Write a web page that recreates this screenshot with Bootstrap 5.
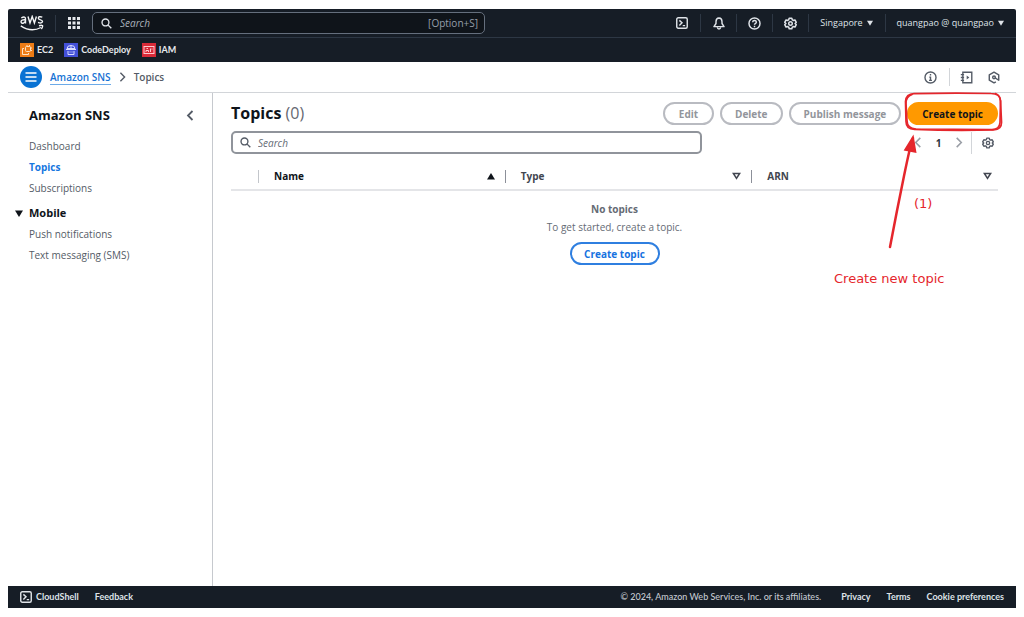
<!DOCTYPE html>
<html lang="en">
<head>
<meta charset="utf-8">
<meta name="viewport" content="width=device-width, initial-scale=1">
<title>Topics | Amazon SNS</title>
<link href="https://cdn.jsdelivr.net/npm/bootstrap@5.3.0/dist/css/bootstrap.min.css" rel="stylesheet">
<style>
:root { --ink:#0f141a; --navy:#161d26; --grey:#545b66; --blue:#0972d3; --accent:#e5262c; }
body { font-family:"Open Sans","Noto Sans",sans-serif; font-size:10px; line-height:20px; color:var(--grey); background:#fff; padding:9px 8px; }
button { color:inherit; background:none; border:0; padding:0; }
svg { display:block; flex:none; }
.topbar { background:var(--navy); color:#dfe3e8; border-radius:2px 2px 0 0; font-size:9px; font-weight:500; }
.toprow { height:29px; border-bottom:1px solid #2d3744; }
.logo-cell { width:48px; border-right:1px solid #2d3744; padding-left:12px; }
.apps { width:36px; }
.global-search { flex:0 1 393px; height:22px; background:#0f141a; border:1px solid #656f7d; border-radius:5px; padding:0 6px 0 8px; }
.global-search input, .filter input { background:none; border:0; outline:0; padding:0; font-style:italic; min-width:0; }
.global-search input { color:#dfe3e8; font-size:10px; }
.global-search input::placeholder { color:#a9b1bb; opacity:1; }
.hint { font-size:10px; color:#969faa; }
.tool { width:36px; height:18px; }
.tool + .tool, .menu { border-left:1px solid #2d3744; }
.menu { height:18px; line-height:18px; padding:0 12px 0 11px; gap:4px; }
.favs { height:24px; padding-left:12px; gap:11px; font-family:Lato,"Open Sans",sans-serif; font-weight:700; }
.favs a { color:#e6e9ed; gap:3px; }
.crumbs { height:31px; border-bottom:1px solid #d2d5d9; padding:0 16px 0 12px; font-size:10px; font-weight:600; }
.burger { width:22px; height:22px; border-radius:50%; background:var(--blue); color:#fff; }
.crumbs a { color:#1672d4; line-height:14px; border-bottom:1px solid #6caae8; text-decoration:none; }
.aid { border-left:1px solid #d2d5d9; height:18px; padding-left:10px; gap:15px; }
.side { flex:0 0 205px; border-right:1px solid #c6c9ce; padding:12px 17px 0 21px; }
.side h2 { font-size:13px; line-height:20px; font-weight:700; color:var(--ink); margin:0; }
.side ul { gap:1px; margin:0; }
.side .first-list { margin-top:11px; }
.side li a { color:var(--grey); }
.side li a.active { color:#1677e0; font-weight:700; }
.side .group { font-size:11px; font-weight:700; color:var(--ink); margin:5px 0 1px -14px; gap:6px; }
main { padding:9px 18px 0; min-width:0; }
h1 { font-size:16px; line-height:23px; font-weight:700; color:var(--ink); margin:0; }
h1 span { font-weight:400; color:#656871; }
.actions { gap:6px; }
.tools { margin-top:6px; }
.pill { height:23px; min-width:51px; border-radius:12px; border:2px solid #b9bbc1; color:#92959b; font-size:10px; line-height:18px; font-weight:700; padding:0 13px; white-space:nowrap; }
.pill-primary { background:#ff9900; border-color:#ff9900; color:var(--ink); }
.pill-outline { border-color:#2f7fe0; color:#1672e0; }
.filter { flex:0 1 471px; height:23px; border:2px solid #90949b; border-radius:5px; padding:0 7px; gap:7px; }
.filter input { font-size:10px; color:var(--grey); }
.filter input::placeholder { color:#656b75; opacity:1; }
.pager { color:#9a9ea6; }
.pager .num { width:9px; margin:0 12px; font-weight:700; color:#30353c; }
.prefs { border-left:1px solid #d2d5d9; height:22px; padding:0 4px 0 10px; color:var(--grey); }
.topics { table-layout:fixed; margin:9px 0 0; width:100%; }
.topics th { height:27px; padding:0; border-bottom:2px solid #e4e5e8; color:#424650; font-weight:700; font-size:10px; vertical-align:middle; }
.topics th.pick { width:27px; }
.topics th:not(.pick) > div { border-left:1px solid #8c9099; height:13px; line-height:13px; padding:0 6px 0 15px; }
.topics th.by > div { border-color:#c3c6cb !important; padding-right:10px !important; }
.topics th.mid > div { padding-right:10px !important; }
.topics th.by { color:var(--ink); }
.topics td { border:0; padding:9px 0 0; line-height:18px; color:#656b75; }
.topics .pill { margin-top:6px; width:90px; padding:0; }
.callout { position:absolute; top:-10px; right:-5px; width:172px; height:200px; pointer-events:none; color:var(--accent); }
.callout p { position:absolute; margin:0; font-family:"DejaVu Sans",sans-serif; font-size:13px; line-height:18px; white-space:nowrap; }
.callout .step { left:83px; top:103px; }
.callout .note { left:3px; top:178px; }
footer { background:var(--navy); color:#c5cad1; height:22px; font-family:Lato,"Open Sans",sans-serif; font-size:9px; font-weight:500; padding:0 12px; }
footer a, footer button { color:#dfe3e8; font-weight:700; }
</style>
</head>
<body class="d-flex flex-column vh-100">
<svg width="0" height="0" class="position-absolute" aria-hidden="true">
  <defs>
    <symbol id="gear" viewBox="0 0 16 16"><path d="M6.4 1.5h3.2l.6 1.9 1.3.8 2-.5 1.6 2.8L13.700 8l1.400 1.500-1.600 2.800-2-.5-1.300.8-.6 1.900H6.400l-.6-1.900-1.300-.8-2 .5L.9 9.500 2.300 8 .9 6.500l1.600-2.800 2 .5 1.300-.8z" fill="none" stroke="currentColor" stroke-width="1.900" stroke-linejoin="round"/><circle cx="8" cy="8" r="2.200" fill="none" stroke="currentColor" stroke-width="1.800"/></symbol>
    <symbol id="lens" viewBox="0 0 16 16"><g fill="none" stroke="currentColor" stroke-width="2"><circle cx="6.500" cy="6.500" r="5"/><path d="M10 10l5 5"/></g></symbol>
    <symbol id="shell" viewBox="0 0 16 16"><g fill="none" stroke="currentColor" stroke-width="1.900"><rect x="1" y="1" width="14" height="14" rx="2"/><path d="M4.500 4.500L8 7.800l-3.500 3.400M9 11.500h3.200"/></g></symbol>
    <symbol id="left" viewBox="0 0 8 12"><path d="M6.500 1L1.500 6l5 5" fill="none" stroke="currentColor" stroke-width="1.700"/></symbol>
    <symbol id="right" viewBox="0 0 8 12"><path d="M1.500 1l5 5-5 5" fill="none" stroke="currentColor" stroke-width="1.700"/></symbol>
    <symbol id="down" viewBox="0 0 8 7"><path d="M0 .5h8L4 7z" fill="currentColor"/></symbol>
    <symbol id="sort" viewBox="0 0 8 7"><path d="M1.200 1.200h5.600L4 5.600z" fill="none" stroke="currentColor" stroke-width="1.400"/></symbol>
  </defs>
</svg>

<header>
  <div class="topbar">
    <div class="toprow d-flex align-items-center">
      <a href="#" class="logo-cell d-flex align-items-center text-reset text-decoration-none" aria-label="AWS home">
        <svg width="24" height="17" viewBox="0 0 24 17"><g fill="none" stroke="#f4f5f6" stroke-width="1.400"><path d="M1.300 2.800Q5.500 .8 5.500 4V8.500M5.500 4.800Q1 4.400 1 6.700 1.300 8.700 3.600 8 5.500 7.300 5.500 5.300M8 1.500l2 6.500 2.200-6.500 2.200 6.500 2-6.500M22.300 2.100Q18.300 .9 18.300 3.200q.2 1.200 2.200 1.700 2 .5 2 1.700-.7 2.200-4.500.8"/><path d="M.8 10.800Q11 17.800 21 12.500M19 10.700q3.500-.8 3.700.1-.1 1.700-1.300 3.200"/></g></svg>
      </a>
      <button class="apps d-flex justify-content-center" aria-label="Services"><svg width="12" height="12" viewBox="0 0 12 12" fill="#e6e9ed"><path d="M0 0h3v3H0zM4.500 0h3v3h-3zM9 0h3v3H9zM0 4.500h3v3H0zM4.500 4.500h3v3h-3zM9 4.500h3v3H9zM0 9h3v3H0zM4.500 9h3v3h-3zM9 9h3v3H9z"/></svg></button>
      <label class="global-search d-flex align-items-center gap-2"><svg width="11" height="11"><use href="#lens"/></svg><input class="flex-grow-1" type="text" placeholder="Search" aria-label="Search"><span class="hint">[Option+S]</span></label>
      <div class="ms-auto d-flex align-items-center">
        <button class="tool d-flex align-items-center justify-content-center" aria-label="CloudShell"><svg width="12" height="12"><use href="#shell"/></svg></button>
        <button class="tool d-flex align-items-center justify-content-center" aria-label="Notifications"><svg width="12" height="13" viewBox="0 0 16 17" fill="none" stroke="currentColor" stroke-width="1.900"><path d="M8 1.200Q4 1.500 4 6v2.500L1.300 12.700h13.400L12 8.500V6Q12 1.500 8 1.200z" stroke-linejoin="round"/><path d="M5.800 13.500q.2 2.400 2.200 2.400t2.200-2.400"/></svg></button>
        <button class="tool d-flex align-items-center justify-content-center" aria-label="Help"><svg width="13" height="13" viewBox="0 0 16 16" fill="none" stroke="currentColor" stroke-width="1.800"><circle cx="8" cy="8" r="6.800"/><path d="M5.700 6.400Q5.900 4.200 8 4.200t2.300 2q0 1.200-1.300 1.900-1 .6-1 1.500M8 10.800v1.700"/></svg></button>
        <button class="tool d-flex align-items-center justify-content-center" aria-label="Settings"><svg width="13" height="13"><use href="#gear"/></svg></button>
        <button class="menu d-flex align-items-center">Singapore <svg width="6" height="6"><use href="#down"/></svg></button>
        <button class="menu d-flex align-items-center">quangpao @ quangpao <svg width="6" height="6"><use href="#down"/></svg></button>
      </div>
    </div>
    <nav class="favs d-flex align-items-center" aria-label="Favorites">
      <a href="#" class="d-flex align-items-center text-decoration-none"><svg width="14" height="14" viewBox="0 0 14 14"><rect width="14" height="14" fill="#ed7c16"/><g fill="none" stroke="#ffe2c2"><rect x="5.500" y="3.500" width="5" height="5" rx="1"/><path d="M4 5.500H2.500v6h6V10M7 2v1.500M9.500 2v1.500M10.500 5H12M10.500 7.500H12"/></g></svg>EC2</a>
      <a href="#" class="d-flex align-items-center text-decoration-none"><svg width="14" height="14" viewBox="0 0 14 14"><rect width="14" height="14" fill="#4350d8"/><g fill="none" stroke="#dadcff"><path d="M3 5.500Q3 2.500 7 2.500t4 3zM2 6.500h10M4 8v3.500h6V8M6 8.500v1M8 8.500v1M7 2.500v3"/></g></svg>CodeDeploy</a>
      <a href="#" class="d-flex align-items-center text-decoration-none"><svg width="14" height="14" viewBox="0 0 14 14"><rect width="14" height="14" fill="#d92a38"/><g fill="none" stroke="#ffc9ce"><rect x="2" y="3.500" width="10" height="7"/><path d="M4 9V7.500h2.500V9M4.500 5.500h1.500M8.500 5.500v3.500M10 5.500v1"/></g></svg>IAM</a>
    </nav>
  </div>
  <div class="crumbs d-flex align-items-center">
    <button class="burger d-flex align-items-center justify-content-center" aria-label="Open navigation"><svg width="12" height="10" viewBox="0 0 12 10" stroke="currentColor" stroke-width="1.600"><path d="M.5 1h11M.5 5h11M.5 9h11"/></svg></button>
    <nav class="d-flex align-items-center gap-2 ms-2" aria-label="Breadcrumb"><a href="#">Amazon SNS</a><svg width="7" height="10"><use href="#right"/></svg><span>Topics</span></nav>
    <button class="ms-auto me-2 pe-1" aria-label="Info"><svg width="13" height="13" viewBox="0 0 16 16" fill="none" stroke="currentColor" stroke-width="1.700"><circle cx="8" cy="8" r="6.800"/><path d="M8 3.800v1.700M6.500 7.500H8v4M6.200 11.500h3.600"/></svg></button>
    <div class="aid d-flex align-items-center">
      <button aria-label="Tutorials"><svg width="13" height="13" viewBox="0 0 16 16" fill="none" stroke="currentColor" stroke-width="1.700"><path d="M3.500 1.500h11v13h-11zM1 4.500h4M1 8h4M1 11.500h4"/><path d="M8.200 5.500v5L11.500 8z" fill="currentColor" stroke="none"/></svg></button>
      <button aria-label="Assistant"><svg width="12" height="13" viewBox="0 0 16 16" fill="none" stroke="currentColor" stroke-width="1.900" stroke-linejoin="round"><path d="M10.500 13.700L8 15.100 1.700 11.500v-7L8 .9l6.300 3.600v7.200L9 8.200"/><circle cx="8" cy="7.800" r="1.800"/></svg></button>
    </div>
  </div>
</header>

<div class="d-flex flex-grow-1">
  <nav class="side" aria-label="Service">
    <div class="d-flex align-items-center justify-content-between"><h2>Amazon SNS</h2><button aria-label="Close navigation"><svg width="9" height="11" viewBox="0 0 9 11"><path d="M6.500 1L2 5.500 6.500 10" fill="none" stroke="currentColor" stroke-width="1.800"/></svg></button></div>
    <ul class="first-list list-unstyled d-flex flex-column">
      <li><a href="#" class="text-decoration-none">Dashboard</a></li>
      <li><a href="#" class="text-decoration-none active" aria-current="page">Topics</a></li>
      <li><a href="#" class="text-decoration-none">Subscriptions</a></li>
    </ul>
    <button class="group d-flex align-items-center"><svg width="8" height="7"><use href="#down"/></svg>Mobile</button>
    <ul class="list-unstyled d-flex flex-column">
      <li><a href="#" class="text-decoration-none">Push notifications</a></li>
      <li><a href="#" class="text-decoration-none">Text messaging (SMS)</a></li>
    </ul>
  </nav>

  <main class="flex-grow-1">
    <div class="position-relative d-flex align-items-center justify-content-between">
      <h1>Topics <span>(0)</span></h1>
      <div class="actions d-flex">
        <button class="pill" disabled>Edit</button>
        <button class="pill" disabled>Delete</button>
        <button class="pill" disabled>Publish message</button>
        <button class="pill pill-primary">Create topic</button>
      </div>
      <div class="callout">
        <svg width="172" height="170" viewBox="0 0 172 170" fill="none" stroke="currentColor" stroke-width="1.700" stroke-linecap="round"><path d="M83 1.700Q122 .5 160 1.500q9 0 9.500 7l1 21q.5 8-8 8.500-40 1-79-.5-8.500-.5-8.500-8l-.500-20Q75 2 83 1.700z"/><path d="M81 2.500q-6 2-6 9l1 17q0 8 9 8.500l75 .5q8.500.5 9-7L169.500 9q-.5-6-5-7.500"/><path d="M59 155q7-37 14-71t9-38" stroke-width="2.500"/><path d="M82 45L74 58l10.500 2z" fill="currentColor"/></svg>
        <p class="step">(1)</p>
        <p class="note">Create new topic</p>
      </div>
    </div>
    <div class="tools d-flex align-items-center justify-content-between">
      <label class="filter d-flex align-items-center"><svg width="11" height="11"><use href="#lens"/></svg><input class="flex-grow-1" type="text" placeholder="Search" aria-label="Find topics"></label>
      <div class="pager d-flex align-items-center">
        <button aria-label="Previous page"><svg width="8" height="11"><use href="#left"/></svg></button>
        <button class="num">1</button>
        <button class="me-2" aria-label="Next page"><svg width="8" height="11"><use href="#right"/></svg></button>
        <button class="prefs d-flex align-items-center" aria-label="Preferences"><svg width="12" height="12"><use href="#gear"/></svg></button>
      </div>
    </div>
    <table class="topics">
      <thead><tr>
        <th class="pick" aria-label="Select"></th>
        <th class="by" scope="col"><div class="d-flex align-items-center justify-content-between">Name<svg width="8" height="7" viewBox="0 0 8 7"><path d="M4 0l4 6.500H0z" fill="currentColor"/></svg></div></th>
        <th class="mid" scope="col"><div class="d-flex align-items-center justify-content-between">Type<svg width="9" height="8"><use href="#sort"/></svg></div></th>
        <th scope="col"><div class="d-flex align-items-center justify-content-between">ARN<svg width="9" height="8"><use href="#sort"/></svg></div></th>
      </tr></thead>
      <tbody><tr><td colspan="4" class="text-center"><div class="fw-bold">No topics</div><div>To get started, create a topic.</div><button class="pill pill-outline">Create topic</button></td></tr></tbody>
    </table>
  </main>
</div>

<footer class="d-flex align-items-center">
  <button class="d-flex align-items-center gap-1"><svg width="12" height="12"><use href="#shell"/></svg>CloudShell</button>
  <a href="#" class="text-decoration-none ms-3">Feedback</a>
  <span class="ms-auto">© 2024, Amazon Web Services, Inc. or its affiliates.</span>
  <a href="#" class="text-decoration-none ms-3 ps-1">Privacy</a>
  <a href="#" class="text-decoration-none ms-3">Terms</a>
  <a href="#" class="text-decoration-none ms-3">Cookie preferences</a>
</footer>
<script src="https://cdn.jsdelivr.net/npm/bootstrap@5.3.0/dist/js/bootstrap.bundle.min.js"></script>
</body>
</html>
